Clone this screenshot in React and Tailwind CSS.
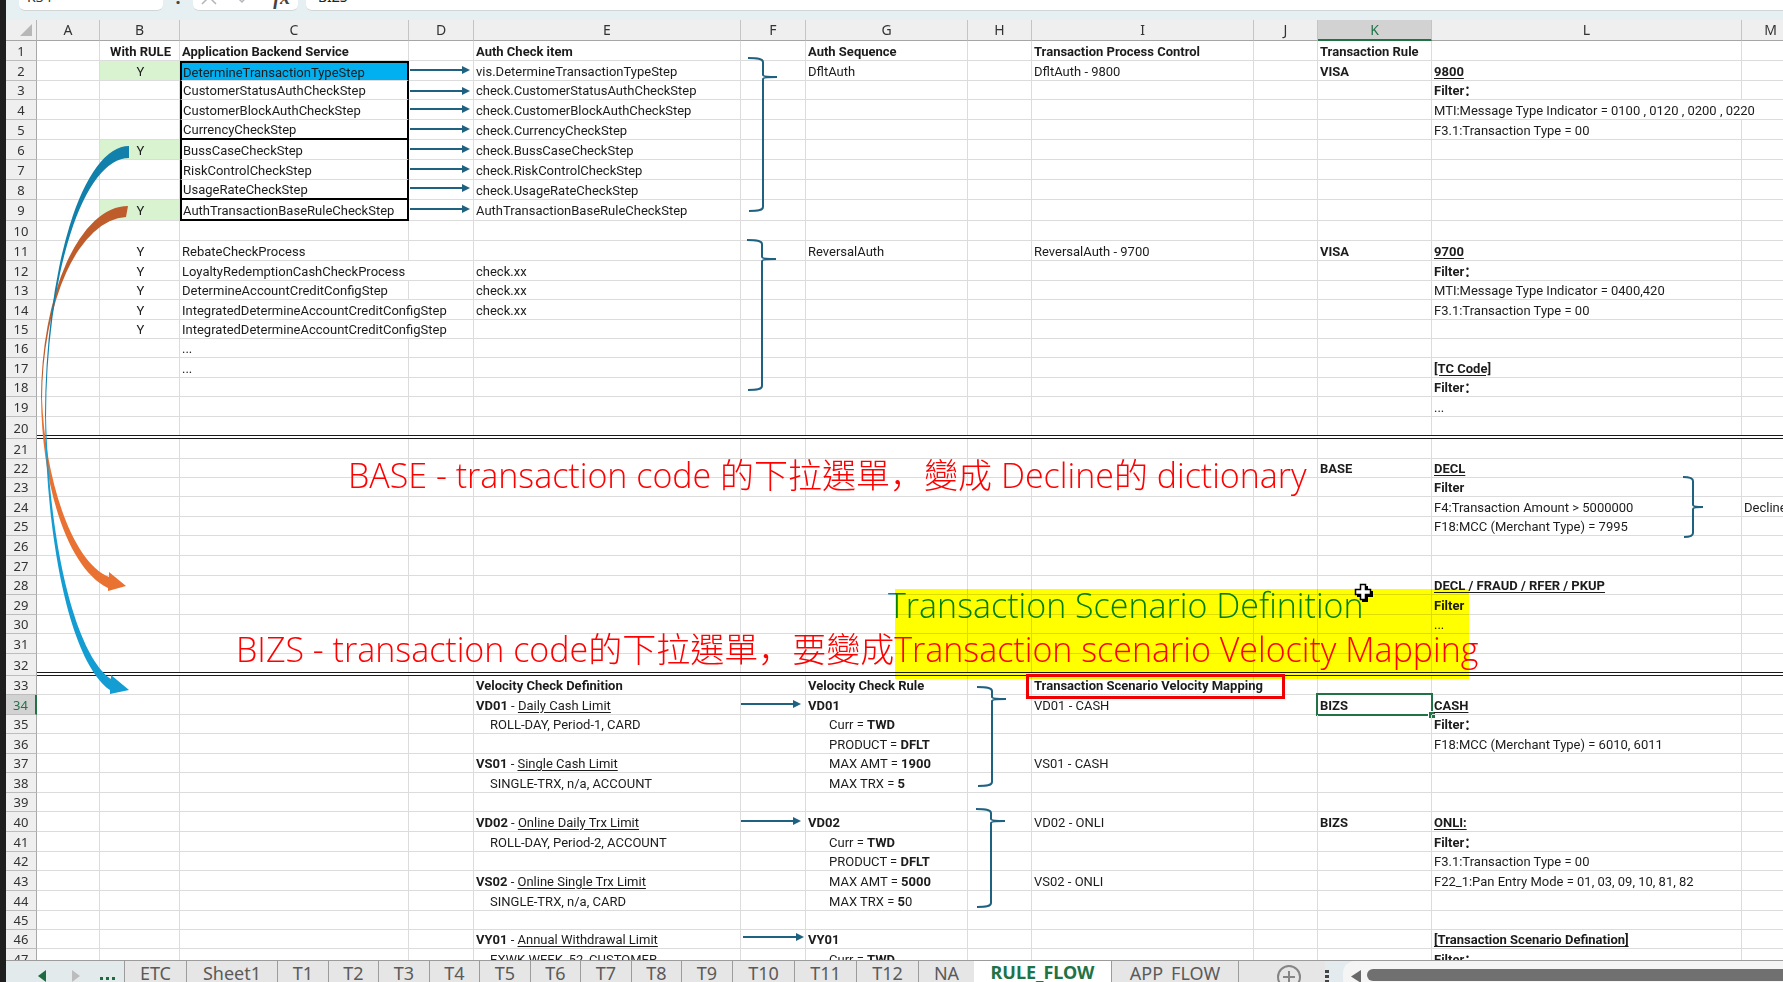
import React from "react";

const COLUMNS = [
  { id: "A", width: "w-[63px]" },
  { id: "B", width: "w-[80px]" },
  { id: "C", width: "w-[229px]" },
  { id: "D", width: "w-[65px]" },
  { id: "E", width: "w-[267px]" },
  { id: "F", width: "w-[65px]" },
  { id: "G", width: "w-[162px]" },
  { id: "H", width: "w-[64px]" },
  { id: "I", width: "w-[222px]" },
  { id: "J", width: "w-[64px]" },
  { id: "K", width: "w-[114px]" },
  { id: "L", width: "w-[310px]" },
  { id: "M", width: "w-[64px]" },
];

const ROW_COUNT = 47;
const SHORT_ROWS = [3, 13, 15, 16, 18, 22, 23, 25, 28, 30, 33, 35, 37, 39, 42, 45, 46];

function rowHeight(row) {
  if (row === 20 || row === 32) return "h-[22px]";
  if (row === 9) return "h-[21px]";
  return SHORT_ROWS.includes(row) ? "h-[19px]" : "h-[20px]";
}

const B = ({ children }) => <span className="font-bold">{children}</span>;
const U = ({ children }) => <span className="underline underline-offset-2">{children}</span>;
const BU = ({ children }) => <span className="font-bold underline underline-offset-2">{children}</span>;
const Indent = ({ children }) => <span className="pl-[14px]">{children}</span>;
const Indent2 = ({ children }) => <span className="pl-[21px]">{children}</span>;

const CELLS = {
  B1: <B>With RULE</B>,
  C1: <B>Application Backend Service</B>,
  E1: <B>Auth Check item</B>,
  G1: <B>Auth Sequence</B>,
  I1: <B>Transaction Process Control</B>,
  K1: <B>Transaction Rule</B>,
  B2: "Y",
  C2: "DetermineTransactionTypeStep",
  E2: "vis.DetermineTransactionTypeStep",
  G2: "DfltAuth",
  I2: "DfltAuth - 9800",
  K2: <B>VISA</B>,
  L2: <BU>9800</BU>,
  C3: "CustomerStatusAuthCheckStep",
  E3: "check.CustomerStatusAuthCheckStep",
  L3: <B>Filter：</B>,
  C4: "CustomerBlockAuthCheckStep",
  E4: "check.CustomerBlockAuthCheckStep",
  L4: "MTI:Message Type Indicator = 0100 , 0120 , 0200 , 0220",
  C5: "CurrencyCheckStep",
  E5: "check.CurrencyCheckStep",
  L5: "F3.1:Transaction Type = 00",
  B6: "Y",
  C6: "BussCaseCheckStep",
  E6: "check.BussCaseCheckStep",
  C7: "RiskControlCheckStep",
  E7: "check.RiskControlCheckStep",
  C8: "UsageRateCheckStep",
  E8: "check.UsageRateCheckStep",
  B9: "Y",
  C9: "AuthTransactionBaseRuleCheckStep",
  E9: "AuthTransactionBaseRuleCheckStep",
  B11: "Y",
  C11: "RebateCheckProcess",
  G11: "ReversalAuth",
  I11: "ReversalAuth - 9700",
  K11: <B>VISA</B>,
  L11: <BU>9700</BU>,
  B12: "Y",
  C12: "LoyaltyRedemptionCashCheckProcess",
  E12: "check.xx",
  L12: <B>Filter：</B>,
  B13: "Y",
  C13: "DetermineAccountCreditConfigStep",
  E13: "check.xx",
  L13: "MTI:Message Type Indicator = 0400,420",
  B14: "Y",
  C14: "IntegratedDetermineAccountCreditConfigStep",
  E14: "check.xx",
  L14: "F3.1:Transaction Type = 00",
  B15: "Y",
  C15: "IntegratedDetermineAccountCreditConfigStep",
  C16: "...",
  C17: "...",
  L17: <BU>[TC Code]</BU>,
  L18: <B>Filter：</B>,
  L19: "...",
  K22: <B>BASE</B>,
  L22: <BU>DECL</BU>,
  L23: <B>Filter</B>,
  L24: "F4:Transaction Amount > 5000000",
  M24: "Decline",
  L25: "F18:MCC (Merchant Type) = 7995",
  L28: <BU>DECL / FRAUD / RFER / PKUP</BU>,
  L29: <B>Filter</B>,
  L30: "...",
  E33: <B>Velocity Check Definition</B>,
  G33: <B>Velocity Check Rule</B>,
  I33: <B>Transaction Scenario Velocity Mapping</B>,
  E34: <><B>VD01</B> - <U>Daily Cash Limit</U></>,
  G34: <B>VD01</B>,
  I34: "VD01 - CASH",
  K34: <B>BIZS</B>,
  L34: <BU>CASH</BU>,
  E35: <Indent>ROLL-DAY, Period-1, CARD</Indent>,
  G35: <Indent2>Curr = <B>TWD</B></Indent2>,
  L35: <B>Filter：</B>,
  G36: <Indent2>PRODUCT = <B>DFLT</B></Indent2>,
  L36: "F18:MCC (Merchant Type) = 6010, 6011",
  E37: <><B>VS01</B> - <U>Single Cash Limit</U></>,
  G37: <Indent2>MAX AMT = <B>1900</B></Indent2>,
  I37: "VS01 - CASH",
  E38: <Indent>SINGLE-TRX, n/a, ACCOUNT</Indent>,
  G38: <Indent2>MAX TRX = <B>5</B></Indent2>,
  E40: <><B>VD02</B> - <U>Online Daily Trx Limit</U></>,
  G40: <B>VD02</B>,
  I40: "VD02 - ONLI",
  K40: <B>BIZS</B>,
  L40: <BU>ONLI:</BU>,
  E41: <Indent>ROLL-DAY, Period-2, ACCOUNT</Indent>,
  G41: <Indent2>Curr = <B>TWD</B></Indent2>,
  L41: <B>Filter：</B>,
  G42: <Indent2>PRODUCT = <B>DFLT</B></Indent2>,
  L42: "F3.1:Transaction Type = 00",
  E43: <><B>VS02</B> - <U>Online Single Trx Limit</U></>,
  G43: <Indent2>MAX AMT = <B>5000</B></Indent2>,
  I43: "VS02 - ONLI",
  L43: "F22_1:Pan Entry Mode = 01, 03, 09, 10, 81, 82",
  E44: <Indent>SINGLE-TRX, n/a, CARD</Indent>,
  G44: <Indent2>MAX TRX = <B>5</B>0</Indent2>,
  E46: <><B>VY01</B> - <U>Annual Withdrawal Limit</U></>,
  G46: <B>VY01</B>,
  L46: <BU>[Transaction Scenario Defination]</BU>,
  E47: <Indent>EXWK-WEEK, 52, CUSTOMER</Indent>,
  G47: <Indent2>Curr = <B>TWD</B></Indent2>,
  L47: <B>Filter：</B>,
};

const SPILLING = ["C12", "C14", "C15", "L4"];

function cellClass(col, row) {
  const list = ["relative whitespace-nowrap p-0 pt-px align-middle"];
  list.push(col === "B" ? "text-center" : "text-left");
  const boxed = col === "C" && row >= 2 && row <= 9;
  if (boxed) {
    list.push("border-x-2 border-black pl-px");
    if (row === 5 || row === 8 || row === 9) list.push("border-b-2");
    else list.push("border-b border-b-[#dcdcdc]");
    if (row === 2) list.push("border-t-2 bg-[#00b0f0]");
  } else {
    list.push("pl-[2px]");
    if (row === 20 || row === 32) list.push("border-b-[4px] border-double border-b-[#1a1a1a]");
    else {
      list.push("border-b border-b-[#dcdcdc]");
      if (!SPILLING.includes(col + row)) list.push("border-r border-r-[#dcdcdc]");
    }
  }
  if (col === "B" && [2, 6, 9].includes(row)) list.push("bg-[#d9f2d0]");
  return list.join(" ");
}

const TABS = [
  ["ETC", "w-[62px]"], ["Sheet1", "w-[91px]"],
  ["T1", "w-[51px]"], ["T2", "w-[50px]"], ["T3", "w-[51px]"], ["T4", "w-[50px]"], ["T5", "w-[51px]"],
  ["T6", "w-[50px]"], ["T7", "w-[51px]"], ["T8", "w-[50px]"], ["T9", "w-[51px]"],
  ["T10", "w-[62px]"], ["T11", "w-[62px]"], ["T12", "w-[62px]"], ["NA", "w-[56px]"],
  ["RULE_FLOW", "w-[137px]"], ["APP_FLOW", "w-[127px]"],
];

function FormulaBar() {
  return (
    <div className="flex h-5 shrink-0 items-start gap-2 overflow-hidden bg-[#e6f0f3] pl-[13px]">
      <input
        aria-label="Name Box"
        defaultValue="K34"
        className="-mt-[17px] h-[28px] w-[144px] shrink-0 rounded-md border-b border-[#d0d6d6] bg-white px-2 text-[14px] text-[#333] outline-none"
      />
      <span className="-mt-[17px] flex h-[28px] w-[14px] shrink-0 items-center justify-center text-[18px] font-bold text-[#444]">:</span>
      <div className="-mt-[17px] flex h-[28px] w-[105px] shrink-0 items-center justify-between rounded-md border-b border-[#d0d6d6] bg-white px-2 text-[#b5b5b5]">
        <button type="button" aria-label="Cancel">
          <svg width="16" height="16" viewBox="0 0 16 16" fill="none" stroke="currentColor" strokeWidth="1.5"><path d="M1 1l14 14M15 1L1 15" /></svg>
        </button>
        <button type="button" aria-label="Enter">
          <svg width="16" height="16" viewBox="0 0 16 16" fill="none" stroke="currentColor" strokeWidth="1.5"><path d="M1 9l4 4L15 2" /></svg>
        </button>
        <button type="button" className="font-['Liberation_Serif',serif] text-[20px] font-bold italic text-[#444]">fx</button>
      </div>
      <input
        aria-label="Formula"
        defaultValue="BIZS"
        className="-mt-[17px] h-[28px] min-w-0 flex-1 rounded-l-md border-b border-[#d0d6d6] bg-white px-3 text-[14px] text-[#222] outline-none"
      />
    </div>
  );
}

function Grid() {
  const rows = Array.from({ length: ROW_COUNT }, (_, i) => i + 1);
  return (
    <table className="w-full min-w-[1794px] table-fixed border-separate border-spacing-0 bg-white font-['Roboto','Noto_Sans_CJK_SC',sans-serif] text-[13px] leading-[15px] text-[#1c1c1c]">
      <colgroup>
        <col className="w-[31px]" />
        {COLUMNS.map((c) => <col key={c.id} className={c.id === "M" ? "" : c.width} />)}
      </colgroup>
      <thead>
        <tr className="h-[21px] font-['Noto_Sans',sans-serif] text-[14px] leading-[16px]">
          <th aria-label="Select all" className="border-b border-r border-b-[#a6a6a6] border-r-[#b4b4b4] bg-[#efefef] p-0">
            <svg width="12" height="12" viewBox="0 0 12 12" className="ml-auto mr-[4px]"><path d="M12 0V12H0Z" fill="#b7b7b7" /></svg>
          </th>
          {COLUMNS.map((c) => (
            <th
              key={c.id}
              scope="col"
              className={
                c.id === "K"
                  ? "border-b-2 border-r border-b-[#217346] border-r-[#c4c4c4] bg-[#d2d2d2] p-0 font-normal text-[#217346]"
                  : "border-b border-r border-b-[#a6a6a6] border-r-[#c4c4c4] bg-[#efefef] p-0 font-normal text-[#333]"
              }
            >
              {c.id}
            </th>
          ))}
        </tr>
      </thead>
      <tbody>
        {rows.map((r) => (
          <tr key={r} className={rowHeight(r)}>
            <th
              scope="row"
              className={
                r === 34
                  ? "border-b border-r-2 border-b-[#bdbdbd] border-r-[#217346] bg-[#d2d2d2] p-0 pt-px font-['Noto_Sans',sans-serif] font-normal text-[#217346]"
                  : "border-b border-r border-b-[#bdbdbd] border-r-[#a8a8a8] bg-[#efefef] p-0 pt-px font-['Noto_Sans',sans-serif] font-normal text-[#333]"
              }
            >
              {r}
            </th>
            {COLUMNS.map((c) => (
              <td key={c.id} className={cellClass(c.id, r)}>
                {CELLS[c.id + r]}
                {(r === 20 || r === 32) && <span className="absolute inset-y-0 right-0 w-px bg-[#dcdcdc]" />}
                {c.id === "K" && r === 34 && (
                  <span className="absolute -inset-x-[2px] -inset-y-[2px] border-2 border-[#217346]">
                    <span className="absolute -bottom-[4px] -right-[4px] h-[7px] w-[7px] border-l border-t border-white bg-[#217346]" />
                  </span>
                )}
              </td>
            ))}
          </tr>
        ))}
      </tbody>
    </table>
  );
}

function Arrow({ x1, x2, y }) {
  return (
    <g>
      <path d={`M${x1} ${y}H${x2 - 6}`} stroke="#1f6181" strokeWidth="2" />
      <path d={`M${x2} ${y}l-8 -4v8z`} fill="#1f6181" />
    </g>
  );
}

function Brace({ x, top, bottom, mid, r = 15, tip = 14 }) {
  const s = x + r;
  return (
    <path
      d={`M${x} ${top}C${s - 4} ${top} ${s} ${top + 1} ${s} ${top + 4}V${mid - 2}Q${s} ${mid} ${s + tip} ${mid}Q${s} ${mid} ${s} ${mid + 2}V${bottom - 4}C${s} ${bottom - 1} ${s - 4} ${bottom} ${x + 1} ${bottom}`}
      fill="none"
      stroke="#1f6181"
      strokeWidth="2"
    />
  );
}

function Drawings() {
  return (
    <svg className="pointer-events-none absolute left-0 top-0" width="1777" height="940" viewBox="6 20 1777 940" aria-hidden="true">
      <path d="M128 206A87 194 0 0 0 41 400L42 400A86 183 0 0 1 126 217Z" fill="#be5d2b" />
      <path d="M129 146A84 272 0 0 0 45 418L46 418A83 260 0 0 1 129 158Z" fill="#1180aa" />
      <path d="M41 398C42 486 67 568 108 588V591L126 586L109 572V577C72 562 45 480 42 398Z" fill="#e97132" />
      <path d="M45 416C46 540 70 662 110 690V694L129 690L111 675V679C77 656 49 550 46 416Z" fill="#149dd2" />
      {[70, 91, 109, 129, 149, 169, 188, 209].map((y) => <Arrow key={y} x1={410} x2={470} y={y} />)}
      <Arrow x1={741} x2={801} y={704} />
      <Arrow x1={741} x2={801} y={821} />
      <Arrow x1={743} x2={804} y={937} />
      <Brace x={748} top={58} bottom={211} mid={77} />
      <Brace x={747} top={240} bottom={390} mid={259} />
      <Brace x={977} top={687} bottom={786} mid={699} />
      <Brace x={976} top={809} bottom={907} mid={821} />
      <Brace x={1683} top={477} bottom={537} mid={507} r={10} tip={10} />
    </svg>
  );
}

const Comma = () => <span className="font-['Noto_Sans_CJK_SC',sans-serif]">，</span>;

function Annotations() {
  return (
    <div className="pointer-events-none font-['Open_Sans','Noto_Sans_CJK_TC',sans-serif] text-[34px] font-light leading-[44px] text-[#ff0000]">
      <p className="absolute left-[342px] top-[432px] whitespace-nowrap">
        BASE - transaction code 的下拉選單<Comma />變成 Decline的 dictionary
      </p>
      <p className="absolute left-[882px] top-[563px] whitespace-nowrap text-[#0080c0]">Transaction Scenario Definition</p>
      <p className="absolute left-[230px] top-[606px] whitespace-nowrap">
        BIZS - transaction code的下拉選單<Comma />要變成Transaction scenario Velocity Mapping
      </p>
      <div className="absolute left-[889px] top-[569px] h-[90px] w-[574px] bg-[#ffff00] mix-blend-multiply" />
      <div className="absolute left-[1020px] top-[654px] h-[25px] w-[259px] border-[3px] border-[#f00000]" />
      <svg className="absolute left-[1348px] top-[563px]" width="19" height="20" viewBox="0 0 19 20" aria-hidden="true">
        <path d="M8 3h6v5h5v6h-5v5H8v-5H3V8h5z" fill="#000" />
        <path d="M6.500 1.500h5v5h5v5h-5v5h-5v-5h-5v-5h5z" fill="#fff" stroke="#000" strokeWidth="1.500" />
      </svg>
    </div>
  );
}

function SheetTabs() {
  return (
    <nav aria-label="Sheets" className="flex h-[22px] shrink-0 items-start overflow-hidden border-t border-[#9c9c9c] bg-[#e6e6e6] font-['Noto_Sans',sans-serif] text-[18px] leading-[24px] text-[#5a5a5a]">
      <div className="flex h-full w-[118px] shrink-0 items-center bg-[#e3eaec] pl-[32px] pt-2">
        <button type="button" aria-label="Previous sheet" className="mr-[26px]">
          <svg width="8" height="12" viewBox="0 0 8 12"><path d="M8 0V12L0 6Z" fill="#1d6b3e" /></svg>
        </button>
        <button type="button" aria-label="Next sheet" className="mr-[20px]">
          <svg width="8" height="12" viewBox="0 0 8 12"><path d="M0 0V12L8 6Z" fill="#bcbcbc" /></svg>
        </button>
        <button type="button" aria-label="More sheets">
          <svg width="16" height="12" viewBox="0 0 16 12"><path d="M0 7h3v3H0zM6 7h3v3H6zM12 7h3v3h-3z" fill="#1d6b3e" /></svg>
        </button>
      </div>
      {TABS.map(([name, width]) =>
        name === "RULE_FLOW" ? (
          <button key={name} type="button" aria-current="page" className={`${width} -mt-px h-[24px] shrink-0 bg-white text-center font-bold text-[#217346]`}>
            {name}
          </button>
        ) : (
          <button key={name} type="button" className={`${width} h-[24px] shrink-0 border-l border-[#9c9c9c] text-center`}>
            {name}
          </button>
        )
      )}
      <div className="flex h-[24px] w-[87px] shrink-0 items-start border-l border-[#9c9c9c] pl-[38px] pt-[4px]">
        <button type="button" aria-label="New sheet">
          <svg width="24" height="24" viewBox="0 0 24 24" fill="none" stroke="#858585" strokeWidth="2"><circle cx="12" cy="12" r="11" /><path d="M12 6v12M6 12h12" /></svg>
        </button>
      </div>
      <div className="flex h-full min-w-0 flex-1 items-start bg-[#e3ebee]">
        <svg className="mr-[14px] mt-[9px] shrink-0" width="4" height="20" viewBox="0 0 4 20" aria-hidden="true">
          <path d="M0 0h4v3H0zM0 5h4v3H0zM0 10h4v3H0z" fill="#444" />
        </svg>
        <div className="flex h-[30px] min-w-0 flex-1 items-start rounded-l-xl bg-[#f5f5f5] pl-[8px]">
          <button type="button" aria-label="Scroll left" className="pt-[9px]">
            <svg width="10" height="13" viewBox="0 0 10 13"><path d="M10 0V13L0 6.500Z" fill="#6a6a6a" /></svg>
          </button>
          <div className="ml-[6px] mt-[8px] h-[12px] min-w-0 flex-1 rounded-l-md bg-[#707070]" />
        </div>
      </div>
    </nav>
  );
}

export default function App() {
  return (
    <div className="flex h-screen overflow-hidden bg-[#1e1e1e] pl-[6px]">
      <main className="flex min-w-0 flex-1 flex-col font-['Noto_Sans',sans-serif]">
        <FormulaBar />
        <div className="relative isolate min-h-0 flex-1 overflow-hidden bg-white">
          <Grid />
          <Drawings />
          <Annotations />
        </div>
        <SheetTabs />
      </main>
    </div>
  );
}
